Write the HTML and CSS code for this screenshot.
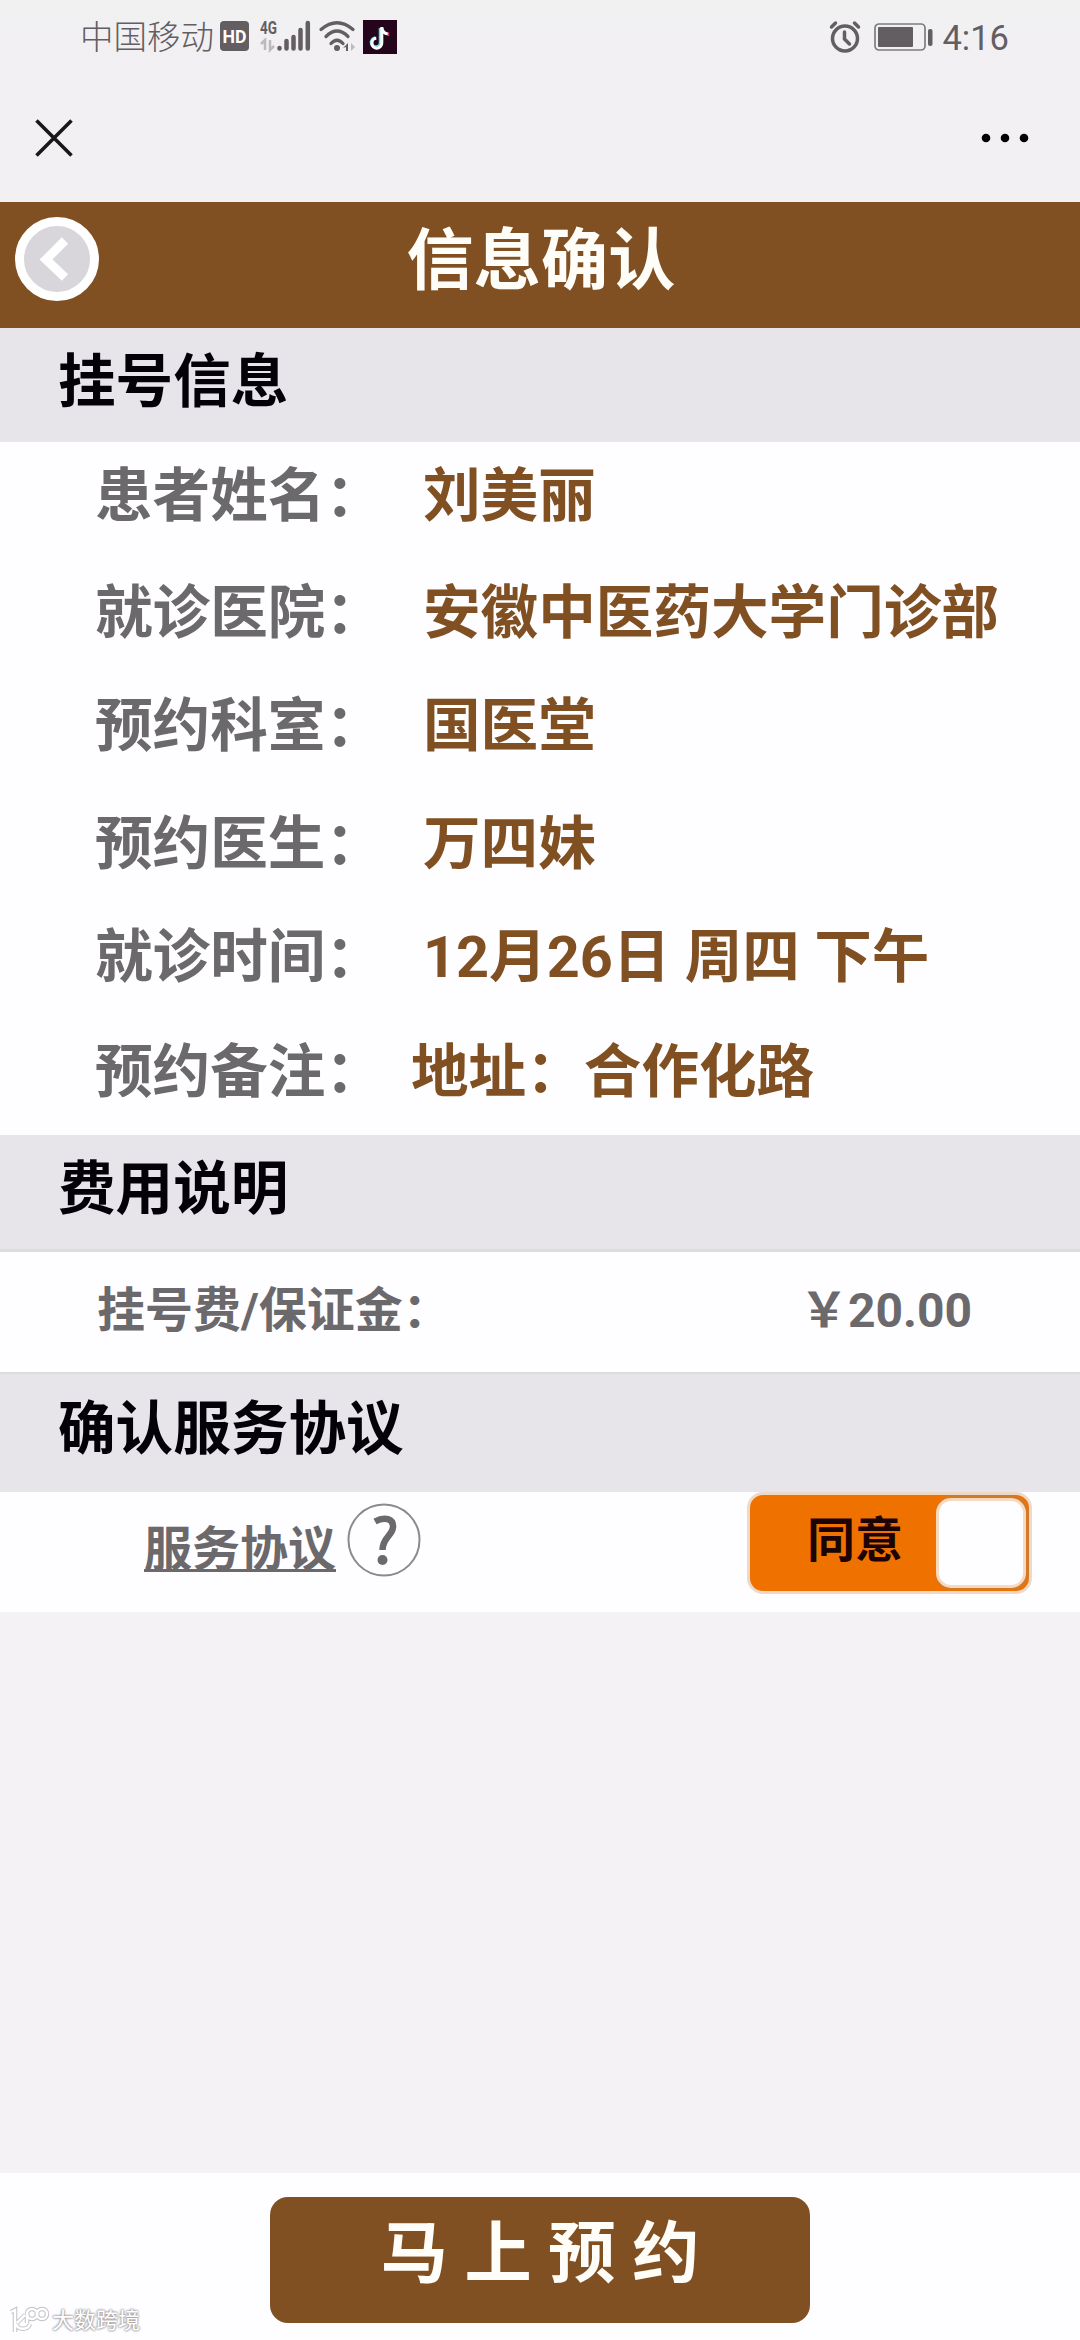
FILE: index.html
```html
<!DOCTYPE html>
<html lang="zh-CN">
<head>
<meta charset="utf-8">
<title>信息确认</title>
<link rel="stylesheet" href="styles.css">
</head>
<body>
<div class="screen">
  <div class="status-bar">
    <span class="carrier">中国移动</span>
    <svg class="status-icons" width="190" height="50" viewBox="0 0 190 50">
      <rect x="4" y="9" width="29" height="30" rx="4" fill="#625e62"/>
      <text x="18.500" y="30.500" class="hd" textLength="24" lengthAdjust="spacingAndGlyphs">HD</text>
      <text x="44" y="22" class="net" textLength="17" lengthAdjust="spacingAndGlyphs">4G</text>
      <path d="M45 32l4-4v10M54 28v10l4-4" fill="none" stroke="#bdb9bd" stroke-width="2.500"/>
      <g stroke="#625e62" stroke-width="4.500" stroke-linecap="round">
        <path d="M63.500 36v.5M70.500 29v7.500M77.500 25v11.500M84.500 18v18.500M91.800 11v25.500"/>
      </g>
      <g fill="none" stroke="#625e62" stroke-width="3.300" stroke-linecap="round">
        <path d="M105 17.500Q121 4 137 17.500M110 24.500Q121 13.500 132 24.500M115 31.500Q121 25 127 31.500"/>
      </g>
      <circle cx="121" cy="36" r="3" fill="#625e62"/>
      <path d="M127 36l5-5v8h-2v-4z" fill="#625e62"/>
      <path d="M135 31v8l4-4z" fill="#bdb9bd"/>
      <rect x="147" y="8" width="34" height="34" fill="#25051b"/>
      <path d="M164.500 16v14.500a4.500 4.500 0 1 1-5-4.400" fill="none" stroke="#5fdfe0" stroke-width="3.500"/>
      <path d="M166 16c.3 3 2.500 5.500 6 6M165.800 15v16a5 5 0 1 1-5.500-4.800" fill="none" stroke="#fff" stroke-width="3"/>
      <path d="M172.500 20.500v3.500" stroke="#e62d62" stroke-width="1.500"/>
    </svg>
    <div class="status-right">
      <svg width="32" height="34" viewBox="0 0 32 34" fill="none" stroke="#625e62" stroke-linecap="round">
        <circle cx="16" cy="18.500" r="12.500" stroke-width="3.500"/>
        <path d="M15.500 12v7l5 5" stroke-width="3.500"/>
        <path d="M2.500 7l4-4M29.500 7l-4-4" stroke-width="3.500"/>
      </svg>
      <svg class="battery" width="60" height="28" viewBox="0 0 60 28">
        <rect x="1" y="1" width="50" height="26" rx="4" fill="none" stroke="#7f7b7f" stroke-width="1.700"/>
        <rect x="4" y="4" width="35" height="20" rx="1" fill="#625e62"/>
        <rect x="54" y="6" width="4.500" height="17" rx="2" fill="#625e62"/>
      </svg>
      <span class="clock">4:16</span>
    </div>
  </div>

  <div class="browser-bar">
    <svg width="38" height="38" viewBox="0 0 38 38"><path d="M1.500 1.500l35 35M36.500 1.500l-35 35" stroke="#18171a" stroke-width="3.600"/></svg>
    <svg width="48" height="10" viewBox="0 0 48 10"><circle cx="5" cy="5" r="4.300"/><circle cx="24" cy="5" r="4.300"/><circle cx="43" cy="5" r="4.300"/></svg>
  </div>

  <header class="page-head">
    <svg class="back" width="84" height="84" viewBox="0 0 84 84">
      <circle cx="42" cy="42" r="37.500" fill="#d8d6da" stroke="#fff" stroke-width="9"/>
      <path d="M50 23.500L31 42.500l19 18" fill="none" stroke="#fff" stroke-width="9"/>
    </svg>
    <h1 class="title">信息确认</h1>
  </header>

  <h2 class="section first">挂号信息</h2>
  <dl class="details">
    <div class="row"><dt>患者姓名：</dt><dd>刘美丽</dd></div>
    <div class="row low"><dt>就诊医院：</dt><dd>安徽中医药大学门诊部</dd></div>
    <div class="row"><dt>预约科室：</dt><dd>国医堂</dd></div>
    <div class="row low"><dt>预约医生：</dt><dd>万四妹</dd></div>
    <div class="row"><dt>就诊时间：</dt><dd>12月26日 周四 下午</dd></div>
    <div class="row"><dt>预约备注：</dt><dd class="note">地址：合作化路</dd></div>
  </dl>

  <h2 class="section cost">费用说明</h2>
  <div class="fee"><span>挂号费/保证金：</span><span class="price">￥20.00</span></div>

  <h2 class="section terms">确认服务协议</h2>
  <div class="agree">
    <a class="link">服务协议</a>
    <svg class="help" width="74" height="74" viewBox="0 0 74 74">
      <circle cx="37" cy="37" r="35.500" fill="none" stroke="#8c8a8c" stroke-width="2"/>
      <path d="M28 18.500C38 13 46.500 16 46 24C45.500 33 35.500 34 35.500 47" fill="none" stroke="#6b696b" stroke-width="6.500"/>
      <circle cx="35.500" cy="57" r="5" fill="#6b696b"/>
    </svg>
    <div class="toggle"><span class="toggle-text">同意</span><span class="knob"></span></div>
  </div>

  <footer class="footer">
    <div class="submit">马 上 预 约</div>
    <div class="watermark">
      <svg width="42" height="30" viewBox="0 0 42 30" fill="none">
        <g stroke="#c3c1c4" stroke-width="4.500">
          <path d="M3 6l4-2v22M22 18a7.500 7.500 0 0 1-14 0M9 17l8-8M19 17V7"/><circle cx="24" cy="8" r="5"/><circle cx="34" cy="8" r="5"/>
        </g>
        <g stroke="#fff" stroke-width="2.500">
          <path d="M3 6l4-2v22M22 18a7.500 7.500 0 0 1-14 0M9 17l8-8M19 17V7"/><circle cx="24" cy="8" r="5"/><circle cx="34" cy="8" r="5"/>
        </g>
      </svg>
      <span>大数跨境</span>
    </div>
  </footer>
</div>
</body>
</html>
```
FILE: styles.css
```css
* { box-sizing: border-box; }
body {
  margin: 0;
  font-family: Roboto, "Noto Sans CJK SC", sans-serif;
}
h1, h2, dl, dd { margin: 0; }
.screen {
  width: 1080px;
  height: 2340px;
  display: flex;
  flex-direction: column;
  background: #f4f2f5;
  overflow: hidden;
}
.status-bar {
  height: 74px;
  padding-left: 80px;
  padding-right: 71px;
  display: flex;
  align-items: flex-start;
  background: linear-gradient(#f1f1f1, #f3eff4);
  color: #625e62;
}
.carrier {
  width: 136px;
  font-size: 33.500px;
  font-weight: 300;
  line-height: 48px;
  padding-top: 14px;
  white-space: nowrap;
}
.status-icons { margin-top: 12px; }
.hd { font: bold 19px Roboto, sans-serif; fill: #fff; text-anchor: middle; }
.net { font: bold 19px Roboto, sans-serif; fill: #625e62; }
.status-right {
  margin-left: auto;
  display: flex;
  align-items: center;
  padding-top: 20px;
}
.battery { margin-left: 13px; }
.clock { margin-left: 8px; font-size: 34.500px; line-height: 32px; padding-top: 2px; }
.browser-bar {
  height: 128px;
  display: flex;
  justify-content: space-between;
  align-items: center;
  padding: 0 51px 0 35px;
  background: #f3f0f4;
}
.page-head {
  height: 126px;
  display: grid;
  grid-template-columns: 99px 1fr 97px;
  background: #805022;
  color: #fffdf8;
}
.back { margin: 15px 0 0 15px; }
.title {
  font-size: 67.200px;
  line-height: 119px;
  text-align: center;
}
.section {
  flex: none;
  padding-left: 58px;
  font-size: 57.600px;
  background: #e7e5e9;
  color: #040208;
}
.first { height: 114px; line-height: 110px; }
.details { height: 693px; color: #6b696b; font-size: 57.600px; font-weight: bold; }
.row { display: flex; height: 115.200px; line-height: 110px; padding-left: 95px; }
.low { line-height: 113px; }
.row dt { width: 328px; }
.row dd { color: #805022; white-space: nowrap; }
.row .note { margin-left: -12px; }
.cost { height: 117px; line-height: 110px; border-bottom: 3px solid #dddbdf; }
.fee {
  height: 120px;
  display: flex;
  justify-content: space-between;
  padding: 0 108px 0 97px;
  background: #fefdff;
  color: #6b696b;
  font-size: 48px;
  font-weight: bold;
  line-height: 117px;
}
.terms { height: 120px; line-height: 112px; border-top: 2px solid #dddbdf; }
.details, .agree, .footer { background: #fefdff; }
.agree {
  height: 120px;
  display: flex;
  align-items: flex-start;
  padding: 0 48px 0 144px;
  font-size: 48px;
  font-weight: bold;
}
.link {
  color: #6b696b;
  line-height: 115px;
  text-decoration: underline;
  text-decoration-thickness: 3px;
  text-underline-offset: 3px;
  text-decoration-skip-ink: none;
}
.help { margin: 11px 0 0 11px; }
.toggle {
  width: 285px;
  height: 102px;
  margin-left: auto;
  display: flex;
  justify-content: space-between;
  border: 3px solid #eed9c6;
  border-radius: 16px;
  background: #ef7100;
}
.toggle-text { padding-left: 57px; line-height: 91px; color: #1c0305; }
.knob {
  width: 90px;
  height: 90px;
  margin: 3px 3px 0 0;
  border: 3px solid #f8d9bd;
  border-radius: 15px;
  background: #fefdff;
  box-shadow: 1px 0 0 2px #d07a2c;
}
.footer {
  position: relative;
  height: 167px;
  margin-top: auto;
  padding-top: 24px;
}
.submit {
  width: 540px;
  height: 126px;
  margin: 0 auto;
  border-radius: 18px;
  background: #805022;
  color: #fffdf8;
  font-size: 67.200px;
  font-weight: bold;
  line-height: 114px;
  text-align: center;
}
.watermark {
  position: absolute;
  left: 8px;
  bottom: 3px;
  display: flex;
  align-items: center;
  gap: 2px;
  color: #fff;
  font-size: 22px;
  line-height: 32px;
  text-shadow: 0 0 2px #9d9b9f, 0 0 2px #9d9b9f, 0 0 3px #9d9b9f;
}
```
